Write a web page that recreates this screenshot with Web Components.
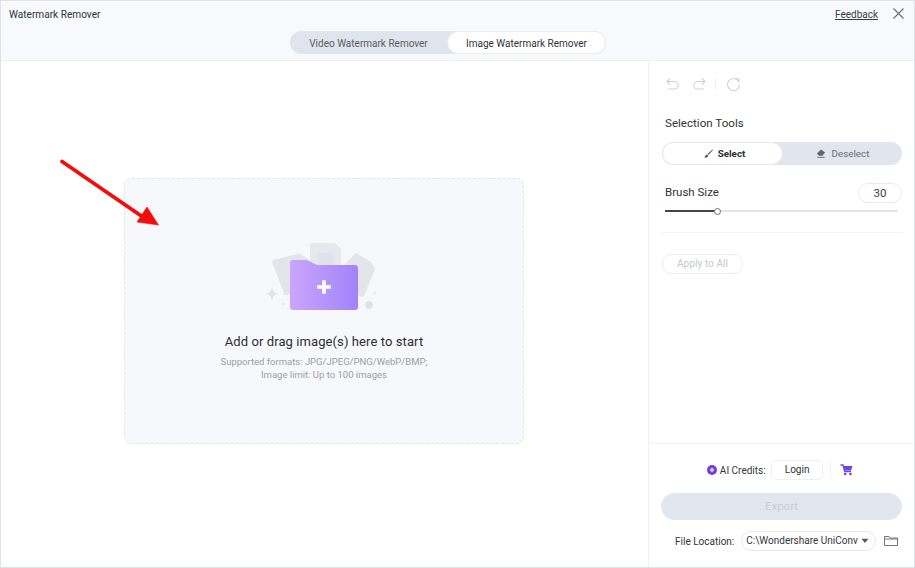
<!DOCTYPE html>
<html lang="en"><head><meta charset="utf-8"><title>Watermark Remover</title>
<style>html,body{margin:0;padding:0;background:#fff}body{font-family:Roboto,"Noto Sans",sans-serif;width:915px;height:568px;overflow:hidden}</style>
</head><body>
<wm-app></wm-app>
<script>
function def(name, css, html){
  customElements.define(name, class extends HTMLElement{
    constructor(){super();const r=this.attachShadow({mode:'open'});r.innerHTML='<style>'+css+'</style>'+html;}
  });
}
def('wm-header',`
:host{display:grid;grid-template-columns:289px auto 1fr;height:59px;background:#f8f9fc;border-bottom:1px solid #eef0f4;font-size:10.100px;color:#33363d}
.l{padding:7px 0 0 8px;line-height:13px;color:#2f3238}
.c{padding-top:30px}
.r{display:flex;justify-content:flex-end;align-items:flex-start;padding:7px 10px 0 0;gap:15px}
a{color:#3a3d44;text-decoration:underline;line-height:14px;font-size:10px}
svg{display:block}
`,`<div class="l">Watermark Remover</div><div class="c"><wm-tabs></wm-tabs></div><div class="r"><a>Feedback</a><svg width="11" height="11" viewBox="0 0 11 11" fill="none" stroke="#666a72" stroke-width="1.1"><path d="M.5.5l10 10M10.500.5l-10 10"/></svg></div>`);
def('wm-tabs',`
:host{display:flex;width:316px;height:23px;border-radius:12px;background:#e0e4ec;font-size:10px;color:#5a5e66}
div{display:flex;align-items:center;justify-content:center;border-radius:12px;height:23px;box-sizing:border-box;padding-top:1px}
.a{width:157px}.b{width:159px;background:#fff;color:#2f3238;border:1px solid #eceef3}
`,`<div class="a">Video Watermark Remover</div><div class="b">Image Watermark Remover</div>`);
def('wm-folder',`
:host{display:block;width:120px;height:75px}svg{display:block}
`,`<svg width="120" height="75" viewBox="-1 0 120 75">
<defs><linearGradient id="g" x1="0" x2="1" y1="0" y2="0"><stop offset="0" stop-color="#cba6fb"/><stop offset="1" stop-color="#a084fa"/></linearGradient></defs>
<path d="M9 17L34 10.500a2 2 0 0 1 2 .5L44 17 30 50 21 52a2 2 0 0 1-2-1L7.500 20a2 2 0 0 1 1.500-3z" fill="#e3e5ea"/>
<path d="M47 0h23l6 6v20H45V2a2 2 0 0 1 2-2z" fill="#e6e8ed"/><path d="M53 10h14v3l2 3v8H53z" fill="#dfe2e8"/>
<path d="M91 10l15 9 4 7-11 27a2 2 0 0 1-2 1L84 48 81 20z" fill="#e3e5ea"/>
<path d="M7 43.500l1.500 5.500 4 2-4 2L7 58.500 5.500 53l-4-2 4-2z" fill="#e3e5ea"/>
<circle cx="104" cy="62" r="3.700" fill="#dfe1e7"/><circle cx="18" cy="61" r="1.300" fill="#e9ebf0"/><path d="M110 48l.8 1.500 1.500.6-1.500.6-.8 1.500-.8-1.500-1.500-.6 1.500-.6z" fill="#e6e8ed"/>
<path d="M25 20a3 3 0 0 1 3-3h13a4 4 0 0 1 2 .6L52 22h38a3 3 0 0 1 3 3v39a3 3 0 0 1-3 3H28a3 3 0 0 1-3-3z" fill="url(#g)"/>
<path d="M57.500 37.500h3v5h5v3h-5v5h-3v-5h-5v-3h5z" fill="#fff" stroke="#fff" stroke-width=".6" stroke-linejoin="round"/>
</svg>`);
def('wm-dropzone',`
:host{display:flex;flex-direction:column;align-items:center;width:400px;height:266px;box-sizing:border-box;background:#f7f8fb;border:1px dashed #e2e4e9;border-radius:8px;padding-top:64px}
h2{margin:15px 0 0;font:400 13px/18px Roboto,"Noto Sans",sans-serif;color:#2b2e34;letter-spacing:.09px}
p{margin:4px 0 0;font-size:9.500px;line-height:13px;color:#9a9da5;text-align:center}
`,`<wm-folder></wm-folder><h2>Add or drag image(s) here to start</h2><p>Supported formats: JPG/JPEG/PNG/WebP/BMP;<br>Image limit: Up to 100 images</p>`);
def('wm-arrow',`
:host{display:block;position:absolute;left:54px;top:94px;width:110px;height:78px;pointer-events:none}svg{display:block}
`,`<svg width="110" height="78" viewBox="0 0 110 78"><path d="M7 6.500L90 63.500" stroke="#f40d0d" stroke-width="3.800" stroke-linecap="round"/><path d="M103.500 70L82 67 92 52z" fill="#f40d0d" stroke="#f40d0d" stroke-width=".6" stroke-linejoin="round"/></svg>`);
def('wm-main',`
:host{display:flex;flex:1;box-sizing:border-box;padding:117px 0 0 123px;position:relative}
`,`<wm-dropzone></wm-dropzone><wm-arrow></wm-arrow>`);
def('wm-history',`
:host{display:flex;align-items:center;height:16px;gap:12px;margin-top:-1px}svg{display:block}
i{display:block;width:1px;height:12px;background:#eceef2;margin:0 -2px 0 -4px}
`,`<svg width="15" height="15" viewBox="0 0 15 15" fill="none" stroke="#cfd1d6" stroke-width="1.1"><path d="M5 1.500L2 4.500l3 3M2 4.500h7.500a3.700 3.700 0 0 1 0 7.500H3"/></svg>
<svg width="15" height="15" viewBox="0 0 15 15" fill="none" stroke="#cfd1d6" stroke-width="1.1"><path d="M10 1.500l3 3-3 3M13 4.500H5.500a3.700 3.700 0 0 0 0 7.500H12"/></svg><i></i>
<svg width="15" height="15" viewBox="0 0 15 15" fill="none" stroke="#cfd1d6" stroke-width="1.1"><path d="M12.500 4.200A6 6 0 1 0 13.500 7.500M9.500 1.800h3.500v3.500"/></svg>`);
def('wm-toggle',`
:host{display:flex;width:240px;height:23px;margin-left:-3px;border-radius:12px;background:#e1e5ed;font-size:9.800px;color:#6a6e76}
div{display:flex;align-items:center;justify-content:center;height:23px;line-height:23px;border-radius:12px;box-sizing:border-box}
.a{width:121px;background:#fff;border:1px solid #e6e8ee;color:#2b2e34;font-weight:700;gap:4px;padding-left:3px}.b{flex:1;gap:6px}svg{display:block}
`,`<div class="a"><svg width="11" height="11" viewBox="0 0 11 11"><path d="M9.500 1.500L4.500 6l1 1 4.500-5z" fill="#55585f"/><path d="M4 6.500c-1 0-1.500.8-1.700 1.500-.2.6-.7 1-1.300 1 1.500 1 4.500.7 4-1.500z" fill="#55585f"/></svg>Select</div>
<div class="b"><svg width="10" height="11" viewBox="0 0 11 11"><path d="M5.500 1l4.500 3.500-3 3.500H3.500L1 5.500z" fill="#63666d"/><path d="M1.500 9.700h8" stroke="#63666d" stroke-width="1"/></svg>Deselect</div>`);
def('wm-slider',`
:host{display:block;height:6px;position:relative;width:233px}
.t{position:absolute;left:0;right:0;top:2px;height:1.500px;background:#e2e4ea}
.f{position:absolute;left:0;width:51px;top:2px;height:1.500px;background:#44474e}
.k{position:absolute;left:49px;top:0;width:7px;height:7px;box-sizing:border-box;border:1.200px solid #6a6d74;border-radius:50%;background:#fff}
`,`<div class="t"></div><div class="f"></div><div class="k"></div>`);
def('wm-side',`
:host{display:flex;flex-direction:column;width:266px;box-sizing:border-box;border-left:1px solid #f0f1f4;font-size:11px;color:#2f3238}
.top{flex:1;padding:16px 11px 0 16px}
.h{margin:24px 0 0;line-height:15px;font-size:11.600px;height:15px}
wm-toggle{margin-top:11px}
.row{display:flex;justify-content:space-between;align-items:center;margin-top:18px;height:20px;width:237px}
.row span{font-size:11.500px;margin-top:-2px}
.num{width:44px;height:20px;border:1px solid #e9ebef;border-radius:10px;box-sizing:border-box;text-align:center;line-height:18px;font-size:11.500px;color:#3a3d44}
wm-slider{margin-top:5px}
hr{border:0;border-top:1px solid #f3f4f6;margin:18px 0 0 -3px;width:241px}
.apply{display:block;margin:21px 0 0 -3px;width:81px;height:20px;border:1px solid #e9ebef;border-radius:10px;box-sizing:border-box;text-align:center;line-height:18px;font-size:10.200px;color:#c5c8ce}
.bottom{border-top:1px solid #f3f4f6;height:124px;box-sizing:border-box;padding:16px 13px 0 12px}
.cred{display:flex;align-items:center;justify-content:center;height:20px;font-size:10px;color:#33363d;margin-left:-2px}
.cred b{display:block;width:10px;height:10px;margin-right:3px}
.login{width:52px;height:20px;margin:0 7px 0 5.500px;border:1px solid #eeeff3;border-radius:5px;box-sizing:border-box;text-align:center;line-height:18px;color:#2f3238}
.sep{width:1px;height:16px;background:#f1f2f5;margin-right:9px}
.export{margin-top:13px;height:27px;border-radius:14px;background:#e2e6ef;text-align:center;line-height:27px;font-size:11.500px;color:#c9cdd6;width:241px}
.file{display:flex;align-items:center;margin-top:11px;height:20px;font-size:10px;padding-left:14px}
.sel{position:relative;margin-left:7px;width:135px;height:20px;border:1px solid #e6e8ed;border-radius:10px;box-sizing:border-box;line-height:18px;padding-left:4px;white-space:nowrap;color:#33363d}
.sel em{font-style:normal;display:block}
.sel svg{position:absolute;right:6px;top:6px}
.file>svg{margin-left:8px}
`,`<div class="top"><wm-history></wm-history><div class="h">Selection Tools</div><wm-toggle></wm-toggle>
<div class="row"><span>Brush Size</span><div class="num">30</div></div><wm-slider></wm-slider><hr><div class="apply">Apply to All</div></div>
<div class="bottom"><div class="cred"><b><svg width="10" height="10" viewBox="0 0 10 10"><circle cx="5" cy="5" r="5" fill="#6d3fd8"/><path d="M5 2.500L7.500 5 5 7.500 2.500 5z" fill="#d9c8ff"/></svg></b>AI Credits:<div class="login">Login</div><div class="sep"></div><svg width="13" height="12" viewBox="0 0 13 12"><path d="M.5 1H3l1.700 6.500h6.300" fill="none" stroke="#6d45e6" stroke-width="1.300"/><path d="M3.500 2h9l-1.500 4.500H4.500z" fill="#6d45e6"/><circle cx="5.200" cy="10" r="1.300" fill="#6d45e6"/><circle cx="10.500" cy="10" r="1.300" fill="#6d45e6"/></svg></div>
<div class="export">Export</div>
<div class="file">File Location:<div class="sel"><em>C:\\Wondershare UniConv</em><svg width="8" height="6" viewBox="0 0 8 6"><path d="M.5.800h7L4 5z" fill="#55585f"/></svg></div><svg width="14" height="12" viewBox="0 0 14 12" fill="none" stroke="#63666d" stroke-width=".9"><path d="M.5 10.500V1.500h4.500l1 1.500h7.500v7.500zM.5 4h13"/></svg></div></div>`);
def('wm-app',`
:host{display:flex;flex-direction:column;width:915px;height:568px;box-sizing:border-box;border:1px solid #dfe2ea;background:#fff}
.body{display:flex;flex:1;min-height:0}
`,`<wm-header></wm-header><div class="body"><wm-main></wm-main><wm-side></wm-side></div>`);
</script>
</body></html>
